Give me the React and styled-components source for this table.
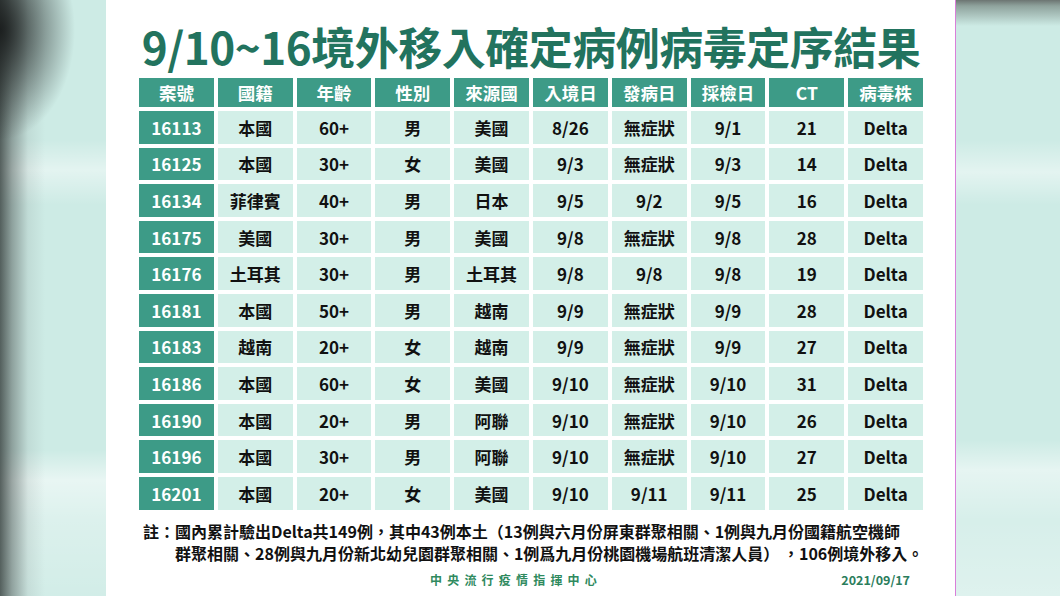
import React from "react";
import styled, { createGlobalStyle } from "styled-components";

const GlobalStyle = createGlobalStyle`
  html, body { margin: 0; padding: 0; }
  body {
    width: 1060px;
    height: 596px;
    overflow: hidden;
    font-family: "Noto Sans CJK TC", "Noto Sans", sans-serif;
  }
`;

const Frame = styled.div`
  display: flex;
  width: 1060px;
  height: 596px;
`;

const LeftBlur = styled.div`
  width: 106px;
  flex: none;
  background:
    radial-gradient(ellipse 75px 110px at 0 30px, rgba(25, 28, 28, 0.95), rgba(25, 28, 28, 0) 100%),
    linear-gradient(to right, rgba(70, 80, 78, 0.9) 0, rgba(90, 100, 98, 0.55) 12px, rgba(120, 130, 128, 0.15) 28px, rgba(0, 0, 0, 0) 45px),
    linear-gradient(to bottom,
      rgba(255, 255, 255, 0) 140px, rgba(255, 255, 255, 0.45) 170px, rgba(255, 255, 255, 0) 205px,
      rgba(255, 255, 255, 0) 450px, rgba(255, 255, 255, 0.55) 480px, rgba(255, 255, 255, 0.3) 520px, rgba(255, 255, 255, 0.1) 596px),
    #cdebe5;
`;

const RightBlur = styled.div`
  flex: 1;
  border-left: 1px solid #d97fd9;
  background:
    linear-gradient(to bottom, #6c7572 0, #8fa39d 6px, rgba(180, 215, 207, 0) 26px),
    linear-gradient(to bottom,
      rgba(255, 255, 255, 0) 140px, rgba(255, 255, 255, 0.45) 172px, rgba(255, 255, 255, 0) 205px,
      rgba(255, 255, 255, 0) 440px, rgba(255, 255, 255, 0.5) 470px, rgba(255, 255, 255, 0.2) 520px, rgba(255, 255, 255, 0.35) 596px),
    #cdebe5;
`;

const Slide = styled.div`
  width: 849px;
  flex: none;
  background: #ffffff;
  box-sizing: border-box;
  padding: 22px 32px 0 33px;
  display: flex;
  flex-direction: column;
`;

const Title = styled.h1`
  margin: 0;
  height: 48px;
  line-height: 48px;
  font-size: 44px;
  font-weight: 700;
  letter-spacing: -0.5px;
  color: #22735e;
  text-align: center;
  white-space: nowrap;
`;

const Table = styled.div`
  margin-top: 8px;
  display: grid;
  grid-template-columns: repeat(10, 1fr);
  grid-template-rows: 29px;
  grid-auto-rows: 32.6px;
  column-gap: 4px;
  row-gap: 4px;
`;

const Cell = styled.div`
  display: flex;
  align-items: center;
  justify-content: center;
  font-size: 17px;
  font-weight: 700;
  white-space: nowrap;
  background: ${(p) => (p.$head || p.$key ? "#3d9b87" : "#d3efe8")};
  color: ${(p) => (p.$head || p.$key ? "#ffffff" : "#111111")};
  ${(p) => (p.$head ? "font-weight: 600; font-size: 17.5px;" : "")}
`;

const Note = styled.div`
  margin: 10px 0 0 4px;
  font-size: 16px;
  font-weight: 700;
  color: #111111;
  white-space: pre;
  display: flex;
  flex-direction: column;
`;

const NoteLine = styled.span`
  display: block;
  height: 22px;
  line-height: 22px;
  padding-left: ${(p) => (p.$indent ? "2em" : "0")};
`;

const Footer = styled.div`
  margin-top: 8px;
  display: flex;
  justify-content: space-between;
  align-items: center;
  padding: 0 13px 0 291px;
  line-height: 16px;
`;

const Agency = styled.span`
  font-size: 12px;
  font-weight: 700;
  letter-spacing: 5.2px;
  color: #2f8a5e;
`;

const DateText = styled.span`
  font-size: 12.5px;
  font-weight: 700;
  color: #2b7d5c;
`;

const headers = ["案號", "國籍", "年齡", "性別", "來源國", "入境日", "發病日", "採檢日", "CT", "病毒株"];

const rows = [
  ["16113", "本國", "60+", "男", "美國", "8/26", "無症狀", "9/1", "21", "Delta"],
  ["16125", "本國", "30+", "女", "美國", "9/3", "無症狀", "9/3", "14", "Delta"],
  ["16134", "菲律賓", "40+", "男", "日本", "9/5", "9/2", "9/5", "16", "Delta"],
  ["16175", "美國", "30+", "男", "美國", "9/8", "無症狀", "9/8", "28", "Delta"],
  ["16176", "土耳其", "30+", "男", "土耳其", "9/8", "9/8", "9/8", "19", "Delta"],
  ["16181", "本國", "50+", "男", "越南", "9/9", "無症狀", "9/9", "28", "Delta"],
  ["16183", "越南", "20+", "女", "越南", "9/9", "無症狀", "9/9", "27", "Delta"],
  ["16186", "本國", "60+", "女", "美國", "9/10", "無症狀", "9/10", "31", "Delta"],
  ["16190", "本國", "20+", "男", "阿聯", "9/10", "無症狀", "9/10", "26", "Delta"],
  ["16196", "本國", "30+", "男", "阿聯", "9/10", "無症狀", "9/10", "27", "Delta"],
  ["16201", "本國", "20+", "女", "美國", "9/10", "9/11", "9/11", "25", "Delta"],
];

export default function App() {
  return (
    <>
      <GlobalStyle />
      <Frame>
        <LeftBlur />
        <Slide>
          <Title>9/10~16境外移入確定病例病毒定序結果</Title>
          <Table>
            {headers.map((h) => (
              <Cell key={h} $head>
                {h}
              </Cell>
            ))}
            {rows.map((r) =>
              r.map((v, i) => (
                <Cell key={r[0] + "-" + i} $key={i === 0}>
                  {v}
                </Cell>
              ))
            )}
          </Table>
          <Note>
            <NoteLine>
              註：國內累計驗出Delta共149例，其中43例本土（13例與六月份屏東群聚相關、1例與九月份國籍航空機師
            </NoteLine>
            <NoteLine $indent>
              群聚相關、28例與九月份新北幼兒園群聚相關、1例爲九月份桃園機場航班清潔人員） ，106例境外移入。
            </NoteLine>
          </Note>
          <Footer>
            <Agency>中央流行疫情指揮中心</Agency>
            <DateText>2021/09/17</DateText>
          </Footer>
        </Slide>
        <RightBlur />
      </Frame>
    </>
  );
}
